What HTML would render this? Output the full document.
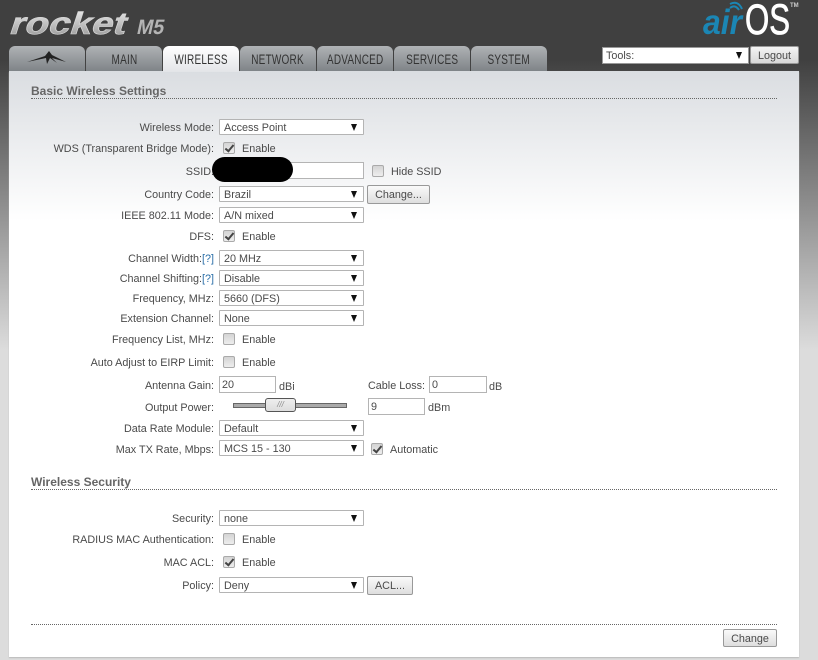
<!DOCTYPE html>
<html>
<head>
<meta charset="utf-8">
<style>
html,body{margin:0;padding:0;width:818px;height:660px;overflow:hidden}
body{position:relative;font-family:"Liberation Sans",sans-serif;font-size:10.8px;color:#4a4a4a;background:linear-gradient(#404040 0,#404040 60px,#dcdcdc 350px,#dcdcdc 660px)}
#panel{position:absolute;left:9px;top:71px;width:790px;height:586px;background:linear-gradient(#dadde1 0,#fff 150px);box-shadow:0 1px 1px #bbb}
.a{position:absolute;white-space:nowrap}
.tab{position:absolute;top:46px;width:76px;height:25px;border-radius:6px 6px 0 0;background:linear-gradient(#b0b3b6 0,#a8abae 15%,#7f8488 100%);text-align:center;line-height:27px;color:#333;z-index:2}
.tab.on{background:linear-gradient(#fff 0,#e3e5e8 100%);height:26px;z-index:3}
.tab span{display:inline-block;font-size:13.5px;transform:scaleX(.74);letter-spacing:.3px;white-space:nowrap;margin:0 -20px}
.l{position:absolute;right:604px;height:16px;line-height:18px;white-space:nowrap}
.s{position:absolute;left:219px;width:143px;height:14px;border:1px solid #b4b4b4;border-radius:1px;background:#fff;line-height:16px;padding:0;color:#4a4a4a;text-indent:4px}
.s:after,.t:after{content:"";position:absolute;right:6px;top:4px;border:3.5px solid transparent;border-top:7px solid #111;border-bottom:0}
.c{position:absolute;left:223px;width:10px;height:10px;border:1px solid #aaa;border-radius:2px;background:linear-gradient(#d4d4d4,#eee)}
.c.k:after{content:"";position:absolute;left:3px;top:0;width:3px;height:7px;border:solid #444;border-width:0 2px 2px 0;transform:rotate(40deg)}
.e{position:absolute;left:242px;height:16px;line-height:18px}
.i{position:absolute;height:15px;border:1px solid #b4b4b4;background:#fff;line-height:17px;text-indent:2px;box-sizing:content-box}
.b{position:absolute;border:1px solid #999;border-radius:2px;background:linear-gradient(#fafafa,#dedede);line-height:18px;text-align:center;color:#4a4a4a;box-sizing:border-box;height:19px}
.h{position:absolute;left:31px;font-weight:bold;font-size:12px;color:#666;line-height:14px}
.d{position:absolute;left:31px;width:746px;border-top:1px dotted #666}
.q{color:#2a6fa8}
</style>
</head>
<body>
<svg class="a" style="left:0;top:0;z-index:1" width="818" height="46">
<defs>
<linearGradient id="g" x1="0" y1="0" x2="0" y2="1"><stop offset="0" stop-color="#f4f4f4"/><stop offset="1" stop-color="#909090"/></linearGradient>
</defs>
<g transform="translate(8 34) skewX(-18)">
<text x="0" y="0" font-family="Liberation Sans" font-weight="bold" font-size="31" fill="url(#g)" stroke="#d8d8d8" stroke-width=".6" textLength="116" lengthAdjust="spacingAndGlyphs">rocket</text>
</g>
<g transform="translate(136 34) skewX(-12)">
<text x="0" y="0" font-family="Liberation Sans" font-weight="bold" font-size="21" fill="#b4b4b4" textLength="27" lengthAdjust="spacingAndGlyphs">M5</text>
</g>
<text x="703" y="34" font-family="Liberation Sans" font-style="italic" font-weight="bold" font-size="35" fill="#1b86b4" textLength="39" lengthAdjust="spacingAndGlyphs">air</text>
<text x="745" y="34" font-family="Liberation Sans" font-size="43" fill="#fff" stroke="#fff" stroke-width=".8" textLength="45" lengthAdjust="spacingAndGlyphs">OS</text>
<text x="790" y="7" font-family="Liberation Sans" font-weight="bold" font-size="6" fill="#ccc">TM</text>
<path d="M730 8 Q735 4 739 10 M730 4 Q738 0 742 9" stroke="#1b86b4" stroke-width="2" fill="none"/>
</svg>

<div id="panel"></div>

<div class="tab" style="left:9px"><svg width="76" height="25" style="display:block"><path d="M18 16 L36 10 L40 5 L43 9 L57 16 L43 12 L48 17 L41 12 L38 18 L37 12 Z" fill="#222"/></svg></div>
<div class="tab" style="left:86px"><span>MAIN</span></div>
<div class="tab on" style="left:163px"><span>WIRELESS</span></div>
<div class="tab" style="left:240px"><span>NETWORK</span></div>
<div class="tab" style="left:317px"><span>ADVANCED</span></div>
<div class="tab" style="left:394px"><span>SERVICES</span></div>
<div class="tab" style="left:471px"><span>SYSTEM</span></div>

<div class="a t" style="left:602px;top:47px;width:145px;height:15px;background:#fff;border:1px solid #999;line-height:17px;text-indent:3px;color:#4a4a4a">Tools:</div>
<div class="b" style="left:750px;top:46px;width:49px;height:18px;line-height:18px;background:linear-gradient(#f4f4f4,#d8d8d8)">Logout</div>

<div class="h" style="top:84px">Basic Wireless Settings</div>
<div class="d" style="top:98px"></div>

<div class="l" style="top:119px">Wireless Mode:</div><div class="s" style="top:119px">Access Point</div>
<div class="l" style="top:140px">WDS (Transparent Bridge Mode):</div><div class="c k" style="top:142px"></div><div class="e" style="top:140px">Enable</div>
<div class="l" style="top:163px">SSID:</div><div class="i" style="left:219px;top:162px;width:143px"></div>
<div class="a" style="left:212px;top:157px;width:81px;height:25px;border-radius:13px;background:#000"></div>
<div class="c" style="left:372px;top:165px"></div><div class="e" style="left:391px;top:163px">Hide SSID</div>
<div class="l" style="top:186px">Country Code:</div><div class="s" style="top:186px">Brazil</div><div class="b" style="left:367px;top:185px;width:63px">Change...</div>
<div class="l" style="top:207px">IEEE 802.11 Mode:</div><div class="s" style="top:207px">A/N mixed</div>
<div class="l" style="top:228px">DFS:</div><div class="c k" style="top:230px"></div><div class="e" style="top:228px">Enable</div>
<div class="l" style="top:250px">Channel Width:<span class="q">[?]</span></div><div class="s" style="top:250px">20 MHz</div>
<div class="l" style="top:270px">Channel Shifting:<span class="q">[?]</span></div><div class="s" style="top:270px">Disable</div>
<div class="l" style="top:290px">Frequency, MHz:</div><div class="s" style="top:290px">5660 (DFS)</div>
<div class="l" style="top:310px">Extension Channel:</div><div class="s" style="top:310px">None</div>
<div class="l" style="top:331px">Frequency List, MHz:</div><div class="c" style="top:333px"></div><div class="e" style="top:331px">Enable</div>
<div class="l" style="top:354px">Auto Adjust to EIRP Limit:</div><div class="c" style="top:356px"></div><div class="e" style="top:354px">Enable</div>
<div class="l" style="top:377px">Antenna Gain:</div><div class="i" style="left:219px;top:376px;width:55px">20</div><div class="e" style="left:279px;top:378px">dBi</div>
<div class="e" style="left:368px;top:377px">Cable Loss:</div><div class="i" style="left:429px;top:376px;width:56px">0</div><div class="e" style="left:489px;top:378px">dB</div>
<div class="l" style="top:399px">Output Power:</div>
<div class="a" style="left:233px;top:403px;width:112px;height:3px;background:#aaa;border:1px solid #666"></div>
<div class="a" style="left:265px;top:398px;width:29px;height:12px;background:linear-gradient(#eee,#ddd);border:1px solid #555;border-radius:3px;text-align:center;line-height:12px;font-size:8px;color:#888;font-style:italic">///</div>
<div class="i" style="left:368px;top:398px;width:55px">9</div><div class="e" style="left:428px;top:399px">dBm</div>
<div class="l" style="top:420px">Data Rate Module:</div><div class="s" style="top:420px">Default</div>
<div class="l" style="top:441px">Max TX Rate, Mbps:</div><div class="s" style="top:440px">MCS 15 - 130</div><div class="c k" style="left:371px;top:443px"></div><div class="e" style="left:390px;top:441px">Automatic</div>

<div class="h" style="top:475px">Wireless Security</div>
<div class="d" style="top:489px"></div>

<div class="l" style="top:510px">Security:</div><div class="s" style="top:510px">none</div>
<div class="l" style="top:531px">RADIUS MAC Authentication:</div><div class="c" style="top:533px"></div><div class="e" style="top:531px">Enable</div>
<div class="l" style="top:554px">MAC ACL:</div><div class="c k" style="top:556px"></div><div class="e" style="top:554px">Enable</div>
<div class="l" style="top:577px">Policy:</div><div class="s" style="top:577px">Deny</div><div class="b" style="left:367px;top:576px;width:46px">ACL...</div>

<div class="d" style="top:624px"></div>
<div class="b" style="left:723px;top:629px;width:54px;height:18px;line-height:18px">Change</div>
</body>
</html>
